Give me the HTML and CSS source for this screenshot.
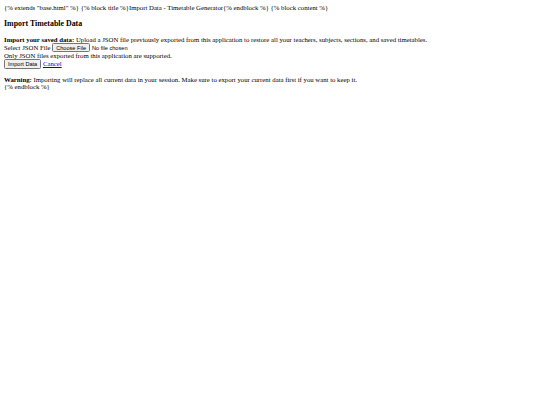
FILE: index.html
```html
<!DOCTYPE html>
<html>
<head>
<meta charset="utf-8">
<link rel="stylesheet" href="styles.css">
</head>
<body class="page">
{% extends "base.html" %} {% block title %}Import Data - Timetable Generator{% endblock %} {% block content %}
<h3 class="title">Import Timetable Data</h3>
<div class="intro"><strong>Import your saved data:</strong> Upload a JSON file previously exported from this application to restore all your teachers, subjects, sections, and saved timetables.</div>
<form class="import-form">
<div class="field"><label class="field-label" for="f">Select JSON File</label> <input class="file-input" id="f" type="file" accept=".json"></div>
<div class="hint">Only JSON files exported from this application are supported.</div>
<div class="actions"><button class="btn" type="button">Import Data</button> <a class="link" href="#">Cancel</a></div>
</form>
<div class="warning"><strong>Warning:</strong> Importing will replace all current data in your session. Make sure to export your current data first if you want to keep it.</div>
{% endblock %}
</body>
</html>
```
FILE: styles.css
```css
html { background: #fff; }
.page {
  margin: 3.6px 4px;
  font-family: "Liberation Serif", "Times New Roman", serif;
  font-size: 6.75px;
  color: #000;
}
.title {
  font-size: 7.9px;
  font-weight: bold;
  margin: 8.4px 0 7.9px;
}
.intro { margin: 0; }
.warning { margin: 7.8px 0 0; }
.import-form { margin: 0; }
.file-input, .btn {
  font-family: "Liberation Sans", Arial, sans-serif;
  font-size: 5.6px;
}
.file-input::file-selector-button {
  font-family: "Liberation Sans", Arial, sans-serif;
  font-size: 5.6px;
  padding: 0.7px 3px;
  border: 1px solid #767676;
  border-radius: 1.5px;
  background: #efefef;
  margin-right: 2px;
}
.btn {
  padding: 0.7px 3px;
  border: 1px solid #767676;
  border-radius: 1.5px;
  background: #efefef;
  color: #000;
}
.link { color: #0000ee; text-decoration: underline; }
```
